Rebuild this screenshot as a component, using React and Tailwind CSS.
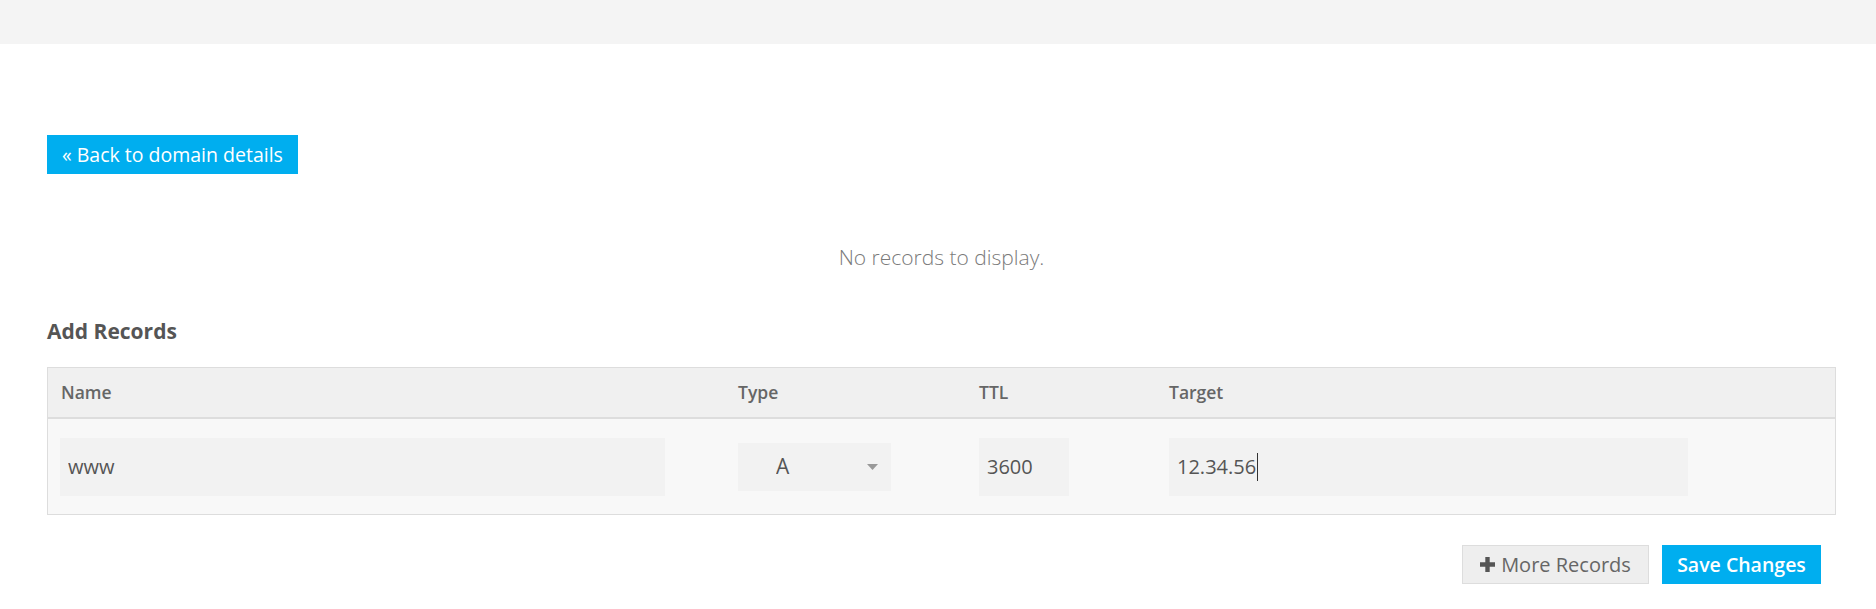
import { useState } from 'react'

export default function App() {
  const [name, setName] = useState('www')
  const [type, setType] = useState('A')
  const [ttl, setTtl] = useState('3600')
  const [target, setTarget] = useState('12.34.56')

  return (
    <div className="min-h-[609px] bg-white font-['Open_Sans',sans-serif] text-[#555]">
      <div className="h-11 bg-[#f4f4f4]" />

      <div className="pl-[47px] pr-[40px]">
        <div className="pt-[91px]">
          <button className="h-[39px] bg-[#00aeef] px-[15px] text-[19.5px] leading-[39px] text-white">
            « Back to domain details
          </button>
        </div>

        <p className="mt-[69px] text-center text-[21px] leading-[28px] font-light text-[#7a7a7a]">No records to display.</p>

        <h3 className="mt-[46px] text-[21px] leading-[28px] font-bold text-[#555]">Add Records</h3>

        <div className="mt-[22px] border border-[#dddddd]">
          <div className="grid grid-cols-[678px_241px_190px_1fr] h-[51px] items-center border-b-2 border-[#dddddd] bg-[#f0f0f0] text-[17.5px] font-semibold text-[#666]">
            <div className="pl-[13px]">Name</div>
            <div className="pl-[12px]">Type</div>
            <div className="pl-[12px]">TTL</div>
            <div className="pl-[12px]">Target</div>
          </div>
          <div className="grid grid-cols-[678px_241px_190px_1fr] h-[95px] items-center bg-[#f8f8f8] text-[20px] text-[#555]">
            <div className="pl-[12px]">
              <input
                value={name}
                onChange={e => setName(e.target.value)}
                className="h-[58px] w-[605px] bg-[#f2f2f2] px-[8px] outline-none"
              />
            </div>
            <div className="pl-[12px]">
              <div className="relative h-[48px] w-[153px] bg-[#f2f2f2]">
                <select
                  value={type}
                  onChange={e => setType(e.target.value)}
                  className="h-full w-full appearance-none bg-transparent pl-[38px] text-[21px] outline-none"
                >
                  <option>A</option>
                  <option>AAAA</option>
                  <option>CNAME</option>
                  <option>MX</option>
                  <option>TXT</option>
                </select>
                <svg className="pointer-events-none absolute right-[13px] top-[21px]" width="11" height="6" viewBox="0 0 11 6">
                  <path d="M0 0h11L5.5 6z" fill="#999" />
                </svg>
              </div>
            </div>
            <div className="pl-[12px]">
              <input
                value={ttl}
                onChange={e => setTtl(e.target.value)}
                className="h-[58px] w-[90px] bg-[#f2f2f2] px-[8px] outline-none"
              />
            </div>
            <div className="pl-[12px]">
              <div className="flex h-[58px] w-[519px] items-center bg-[#f2f2f2] px-[8px]">
                <span>{target}</span>
                <span className="ml-px h-[28px] w-px bg-[#333]" />
              </div>
            </div>
          </div>
        </div>

        <div className="mt-[30px] flex justify-end gap-[13px] pr-[15px]">
          <button className="flex h-[39px] w-[187px] items-center justify-center gap-[6px] border border-[#dddddd] bg-[#eeeeee] text-[20px] text-[#666]">
            <svg width="15" height="15" viewBox="0 0 13 13">
              <path d="M4.6 0h3.8v4.6H13v3.8H8.4V13H4.6V8.4H0V4.6h4.6z" fill="#555" />
            </svg>
            More Records
          </button>
          <button
            onClick={() => setTarget(target)}
            className="h-[39px] w-[159px] bg-[#00aeef] text-[19.5px] font-semibold text-white"
          >
            Save Changes
          </button>
        </div>
      </div>
    </div>
  )
}
